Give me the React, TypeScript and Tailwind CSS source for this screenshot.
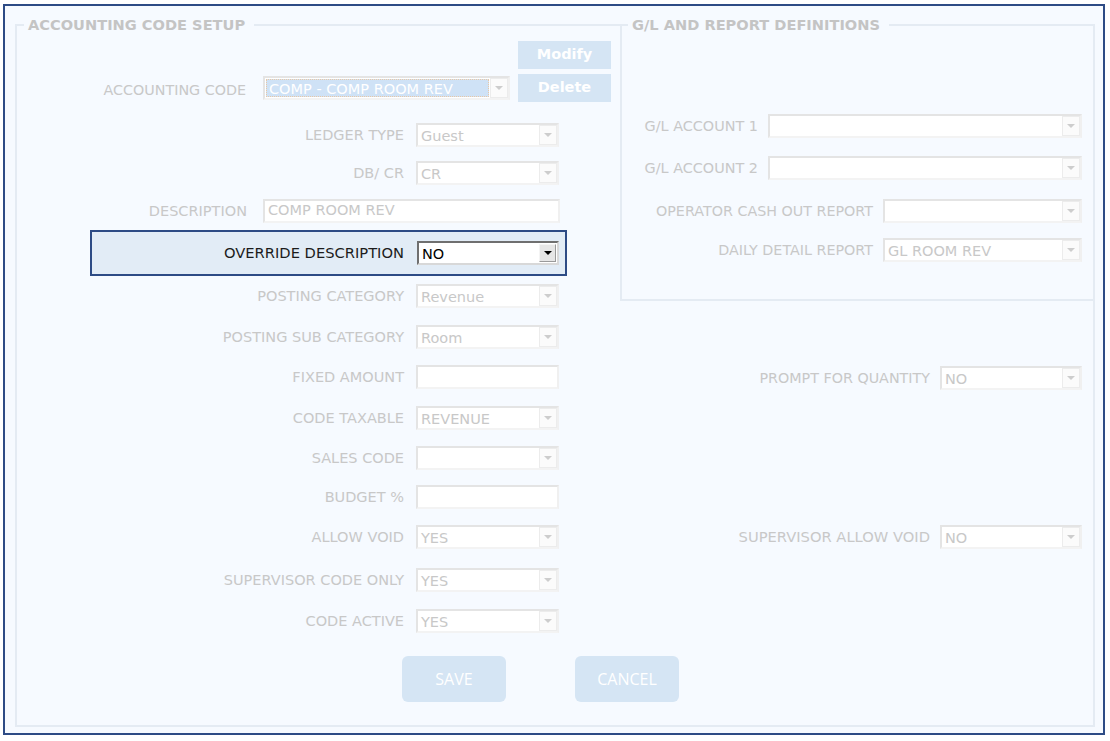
import clsx from "clsx"

const font = "font-['DejaVu_Sans',Verdana,sans-serif]"

type ComboProps = {
  value?: string
  className?: string
}

const Arrow = ({ dark }: { dark?: boolean }) => (
  <span
    className={clsx(
      "h-0 w-0 border-x-[4px] border-t-[4px] border-x-transparent",
      dark ? "border-t-black" : "border-t-[#cdcdcd]"
    )}
  />
)

const Combo = ({ value = "", className }: ComboProps) => (
  <div
    className={clsx(
      "flex h-[24px] border-2 border-b-[#f3f3f3] border-l-[#e4e4e4] border-r-[#f0f0f0] border-t-[#e4e4e4] bg-white",
      className
    )}
  >
    <div className="flex-1 truncate pl-[3px] text-[14.5px] leading-[22px] text-[#c8c8c8]">{value}</div>
    <div className="flex w-[18px] items-center justify-center border border-[#ececec] bg-[#fbfbfb]">
      <Arrow />
    </div>
  </div>
)

const TextBox = ({ value = "", className }: ComboProps) => (
  <div
    className={clsx(
      "h-[24px] truncate border-2 border-b-[#f3f3f3] border-l-[#e4e4e4] border-r-[#f0f0f0] border-t-[#e4e4e4] bg-white pl-[3px] text-[14.5px] leading-[19px] text-[#c8c8c8]",
      className
    )}
  >
    {value}
  </div>
)

type RowProps = {
  label: string
  children: React.ReactNode
  className?: string
}

const Row = ({ label, children, className }: RowProps) => (
  <div className={clsx("flex items-center", className)}>
    <div className="w-[387px] text-right text-[14.5px] leading-none text-[#c8c8c8]">{label}</div>
    <div className="ml-[12px]">{children}</div>
  </div>
)

const Legend = ({ children, className }: { children: React.ReactNode; className?: string }) => (
  <div
    className={clsx(
      "-mt-[10px] h-[17px] self-start bg-[#f6faff] text-[14.6px] font-bold leading-[17px] text-[#c4c4c4]",
      className
    )}
  >
    {children}
  </div>
)

const App = () => {
  return (
    <div className={clsx("h-[741px] w-[1110px] bg-white pl-[3px] pt-[4px]", font)}>
      <div className="h-[731px] w-[1102px] border-2 border-[#2d4b85] bg-[#f6faff] pl-[10px] pt-[18px]">
        <div className="flex h-[703px] w-[1080px] flex-col border-2 border-[#e4ebf3]">
          <div className="flex">
            {/* left column */}
            <div className="flex w-[603px] flex-col">
              <Legend className="ml-[7px] pl-[4px] pr-[9px]">ACCOUNTING CODE SETUP</Legend>

              <div className="mt-[8px] flex items-end">
                <div className="mb-[2px] flex items-center">
                  <div className="w-[229px] pt-[4px] text-right text-[14.3px] leading-none text-[#c8c8c8]">ACCOUNTING CODE</div>
                  <div className="ml-[17px] flex h-[24px] w-[247px] border-2 border-b-[#f3f3f3] border-l-[#e4e4e4] border-r-[#f0f0f0] border-t-[#e4e4e4] bg-white">
                    <div className="m-[1px] flex-1 truncate border border-dotted border-[#e9c8a6] bg-[#cfe2f6] pl-[2px] pt-[1px] text-[14.5px] leading-[16px] text-white">
                      COMP - COMP ROOM REV
                    </div>
                    <div className="flex w-[18px] items-center justify-center border border-[#ececec] bg-[#fbfbfb]">
                      <Arrow />
                    </div>
                  </div>
                </div>
                <div className="ml-[8px] flex w-[93px] flex-col gap-[5px]">
                  <div className="flex h-[28px] items-center justify-center bg-[#d5e5f4] text-[14.5px] font-bold text-white">Modify</div>
                  <div className="flex h-[28px] items-center justify-center bg-[#d5e5f4] text-[14.5px] font-bold text-white">Delete</div>
                </div>
              </div>

              <Row label="LEDGER TYPE" className="mt-[21px]">
                <Combo value="Guest" className="w-[143px]" />
              </Row>
              <Row label="DB/ CR" className="mt-[14px]">
                <Combo value="CR" className="w-[143px]" />
              </Row>

              <div className="mt-[14px] flex items-center">
                <div className="w-[230px] text-right text-[14.5px] leading-none text-[#c8c8c8]">DESCRIPTION</div>
                <TextBox value="COMP ROOM REV" className="ml-[16px] w-[297px]" />
              </div>

              <div className="ml-[73px] mt-[7px] flex h-[46px] w-[477px] items-center border-2 border-[#2d4b85] bg-[#e2ecf6]">
                <div className="w-[312px] text-right text-[14.7px] leading-none text-[#1c1c1c]">OVERRIDE DESCRIPTION</div>
                <div className="ml-[13px] flex h-[24px] w-[142px] border-2 border-b-[#d8d8d8] border-l-[#6f6f6f] border-r-[#d8d8d8] border-t-[#6f6f6f] bg-white">
                  <div className="flex-1 pl-[3px] text-[14.5px] leading-[23px] text-black">NO</div>
                  <div className="m-[1px] flex w-[17px] items-center justify-center border border-b-[#9a9a9a] border-l-[#f4f4f4] border-r-[#9a9a9a] border-t-[#f4f4f4] bg-[#e6e6e6]">
                    <Arrow dark />
                  </div>
                </div>
              </div>

              <Row label="POSTING CATEGORY" className="mt-[8px]">
                <Combo value="Revenue" className="w-[143px]" />
              </Row>
              <Row label="POSTING SUB CATEGORY" className="mt-[17px]">
                <Combo value="Room" className="w-[143px]" />
              </Row>
              <Row label="FIXED AMOUNT" className="mt-[16px]">
                <TextBox className="w-[143px]" />
              </Row>
              <Row label="CODE TAXABLE" className="mt-[17px]">
                <Combo value="REVENUE" className="w-[143px]" />
              </Row>
              <Row label="SALES CODE" className="mt-[16px]">
                <Combo className="w-[143px]" />
              </Row>
              <Row label="BUDGET %" className="mt-[15px]">
                <TextBox className="w-[143px]" />
              </Row>
              <Row label="ALLOW VOID" className="mt-[16px]">
                <Combo value="YES" className="w-[143px]" />
              </Row>
              <Row label="SUPERVISOR CODE ONLY" className="mt-[19px]">
                <Combo value="YES" className="w-[143px]" />
              </Row>
              <Row label="CODE ACTIVE" className="mt-[17px]">
                <Combo value="YES" className="w-[143px]" />
              </Row>
            </div>

            {/* right column */}
            <div className="-mr-[2px] -mt-[2px] flex w-[475px] flex-col">
              <div className="flex h-[277px] flex-col border-2 border-[#e4ebf3] bg-[#f6faff]">
                <Legend className="ml-[6px] pl-[4px] pr-[9px]">G/L AND REPORT DEFINITIONS</Legend>
                <div className="mt-[81px] flex items-center">
                  <div className="w-[136px] text-right text-[14.4px] leading-none text-[#c8c8c8]">G/L ACCOUNT 1</div>
                  <Combo className="ml-[10px] w-[314px]" />
                </div>
                <div className="mt-[18px] flex items-center">
                  <div className="w-[136px] text-right text-[14.4px] leading-none text-[#c8c8c8]">G/L ACCOUNT 2</div>
                  <Combo className="ml-[10px] w-[314px]" />
                </div>
                <div className="mt-[19px] flex items-center">
                  <div className="w-[251px] text-right text-[14.3px] leading-none text-[#c8c8c8]">OPERATOR CASH OUT REPORT</div>
                  <Combo className="ml-[10px] w-[199px]" />
                </div>
                <div className="mt-[15px] flex items-center">
                  <div className="w-[251px] text-right text-[14.3px] leading-none text-[#c8c8c8]">DAILY DETAIL REPORT</div>
                  <Combo value="GL ROOM REV" className="ml-[10px] w-[199px]" />
                </div>
              </div>

              <div className="mt-[65px] flex items-center">
                <div className="w-[310px] text-right text-[14.3px] leading-none text-[#c8c8c8]">PROMPT FOR QUANTITY</div>
                <Combo value="NO" className="ml-[10px] w-[142px]" />
              </div>
              <div className="mt-[135px] flex items-center">
                <div className="w-[310px] text-right text-[14.7px] leading-none text-[#c8c8c8]">SUPERVISOR ALLOW VOID</div>
                <Combo value="NO" className="ml-[10px] w-[142px]" />
              </div>
            </div>
          </div>

          <div className="mt-[23px] flex gap-[69px] pl-[385px] font-['Open_Sans',sans-serif]">
            <div className="flex h-[46px] w-[104px] items-center justify-center rounded-[6px] bg-[#d5e5f4] text-[16px] text-white">SAVE</div>
            <div className="flex h-[46px] w-[104px] items-center justify-center rounded-[6px] bg-[#d5e5f4] text-[16px] text-white">CANCEL</div>
          </div>
        </div>
      </div>
    </div>
  )
}

export default App
